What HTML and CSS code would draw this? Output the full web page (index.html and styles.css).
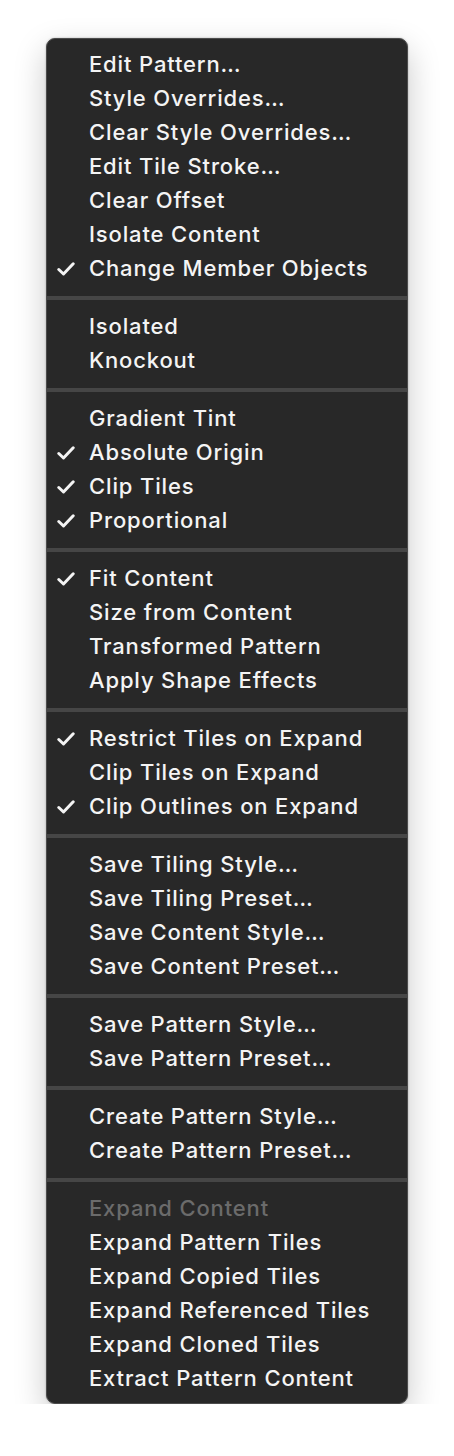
FILE: index.html
```html
<!DOCTYPE html>
<html lang="en">
<head>
  <meta charset="UTF-8">
  <title>Pattern Menu</title>
  <link rel="stylesheet" href="styles.css">
</head>
<body>
  <div class="menu">
    <div class="group">
      <div class="item">Edit Pattern…</div>
      <div class="item">Style Overrides…</div>
      <div class="item">Clear Style Overrides…</div>
      <div class="item">Edit Tile Stroke…</div>
      <div class="item">Clear Offset</div>
      <div class="item">Isolate Content</div>
      <div class="item checked">Change Member Objects</div>
    </div>
    <div class="sep"></div>
    <div class="group">
      <div class="item">Isolated</div>
      <div class="item">Knockout</div>
    </div>
    <div class="sep"></div>
    <div class="group">
      <div class="item">Gradient Tint</div>
      <div class="item checked">Absolute Origin</div>
      <div class="item checked">Clip Tiles</div>
      <div class="item checked">Proportional</div>
    </div>
    <div class="sep"></div>
    <div class="group">
      <div class="item checked">Fit Content</div>
      <div class="item">Size from Content</div>
      <div class="item">Transformed Pattern</div>
      <div class="item">Apply Shape Effects</div>
    </div>
    <div class="sep"></div>
    <div class="group">
      <div class="item checked">Restrict Tiles on Expand</div>
      <div class="item">Clip Tiles on Expand</div>
      <div class="item checked">Clip Outlines on Expand</div>
    </div>
    <div class="sep"></div>
    <div class="group">
      <div class="item">Save Tiling Style…</div>
      <div class="item">Save Tiling Preset…</div>
      <div class="item">Save Content Style…</div>
      <div class="item">Save Content Preset…</div>
    </div>
    <div class="sep"></div>
    <div class="group">
      <div class="item">Save Pattern Style…</div>
      <div class="item">Save Pattern Preset…</div>
    </div>
    <div class="sep"></div>
    <div class="group">
      <div class="item">Create Pattern Style…</div>
      <div class="item">Create Pattern Preset…</div>
    </div>
    <div class="sep"></div>
    <div class="group">
      <div class="item disabled">Expand Content</div>
      <div class="item">Expand Pattern Tiles</div>
      <div class="item">Expand Copied Tiles</div>
      <div class="item">Expand Referenced Tiles</div>
      <div class="item">Expand Cloned Tiles</div>
      <div class="item">Extract Pattern Content</div>
    </div>
  </div>
</body>
</html>
```

FILE: styles.css
```css
body {
  margin: 0;
  padding: 38px 0 0 46px;
  background: #ffffff;
  font-family: Inter, "Liberation Sans", sans-serif;
}
.menu {
  width: 360px;
  padding: 9px 0 7px;
  background: #282828;
  border: 1px solid #4c4c4c;
  border-radius: 9px;
  box-shadow: 0 12px 32px rgba(0, 0, 0, 0.22), 0 0 2px rgba(0, 0, 0, 0.3);
  color: #f4f4f4;
}
.item {
  position: relative;
  height: 34px;
  line-height: 33px;
  padding-left: 42px;
  font-size: 22px;
  font-weight: 450;
  letter-spacing: 0.85px;
  white-space: nowrap;
}
.item.checked::before {
  content: "";
  position: absolute;
  left: 10px;
  top: 10px;
  width: 18px;
  height: 14px;
  background: url("data:image/svg+xml,%3Csvg xmlns='http://www.w3.org/2000/svg' viewBox='0 0 18 14'%3E%3Cpath d='M1.8 7.5 L6.5 12 L16.2 1.8' fill='none' stroke='%23f4f4f4' stroke-width='3' stroke-linecap='round' stroke-linejoin='round'/%3E%3C/svg%3E") no-repeat;
}
.item.disabled {
  color: #6b6b6b;
}
.sep {
  height: 4px;
  margin: 10px 0;
  background: #464646;
}
```
